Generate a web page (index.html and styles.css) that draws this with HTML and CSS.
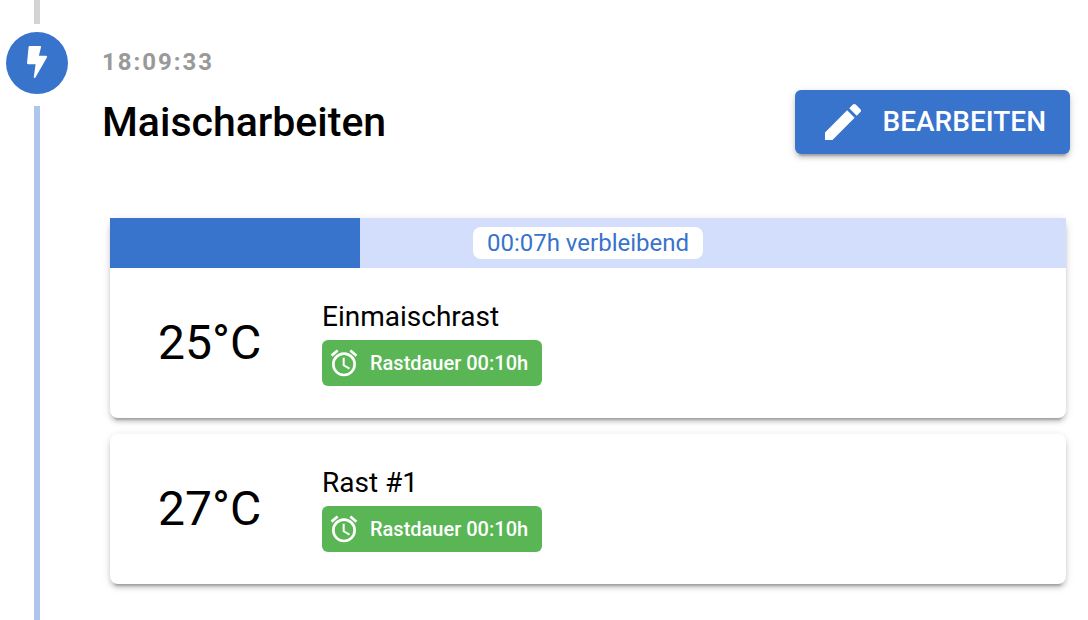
FILE: index.html
```html
<!DOCTYPE html>
<html lang="de">
<head>
<meta charset="utf-8">
<meta name="viewport" content="width=device-width, initial-scale=1">
<title>Maischarbeiten</title>
<link rel="stylesheet" href="styles.css">
</head>
<body>
<svg class="symbols" aria-hidden="true">
  <symbol id="alarm" viewBox="0 0 24 24">
    <path d="M12 20a7 7 0 0 1-7-7 7 7 0 0 1 7-7 7 7 0 0 1 7 7 7 7 0 0 1-7 7m0-16a9 9 0 0 0-9 9 9 9 0 0 0 9 9 9 9 0 0 0 9-9 9 9 0 0 0-9-9m.5 4H11v6l4.750 2.850.75-1.230-4-2.370V8M7.880 3.390 6.600 1.860 2 5.710l1.290 1.530 4.590-3.850M22 5.720l-4.600-3.860-1.290 1.530 4.600 3.860L22 5.720z"/>
  </symbol>
</svg>
<main class="timeline">
  <div class="rail">
    <span class="rail-line rail-line-past"></span>
    <span class="rail-dot">
      <svg class="rail-icon" viewBox="0 0 34 34" aria-hidden="true">
        <path d="M9.800 0H20a1 1 0 0 1 1 1.300L18.900 9.700H26a1.100 1.100 0 0 1 1 1.600L15.600 31.300c-.6 1.100-2 .7-1.800-.6L15.600 18.200H8.200A1.200 1.200 0 0 1 7 16.900L8.600 1.100A1.200 1.200 0 0 1 9.800 0z"/>
      </svg>
    </span>
    <span class="rail-line rail-line-active"></span>
  </div>
  <section class="content">
    <time class="time">18:09:33</time>
    <header class="header">
      <h1 class="title">Maischarbeiten</h1>
      <button class="edit" type="button">
        <svg class="edit-icon" viewBox="0 0 24 24" aria-hidden="true">
          <path d="M20.710 7.040c.39-.39.39-1.040 0-1.410l-2.340-2.340c-.37-.39-1.020-.39-1.410 0l-1.840 1.830 3.750 3.750M3 17.250V21h3.750L17.810 9.930l-3.750-3.750L3 17.250z"/>
        </svg>
        <span>BEARBEITEN</span>
      </button>
    </header>
    <div class="cards">
      <article class="card">
        <div class="progress" role="progressbar" aria-label="Fortschritt" aria-valuenow="26" aria-valuemin="0" aria-valuemax="100">
          <div class="progress-fill" style="width: 26.2%"></div>
          <span class="progress-label">00:07h verbleibend</span>
        </div>
        <div class="card-body">
          <div class="temp">25°C</div>
          <div class="rest">
            <h2 class="rest-name">Einmaischrast</h2>
            <span class="tag"><svg class="tag-icon" aria-hidden="true"><use href="#alarm"/></svg>Rastdauer 00:10h</span>
          </div>
        </div>
      </article>
      <article class="card">
        <div class="card-body">
          <div class="temp">27°C</div>
          <div class="rest">
            <h2 class="rest-name">Rast #1</h2>
            <span class="tag"><svg class="tag-icon" aria-hidden="true"><use href="#alarm"/></svg>Rastdauer 00:10h</span>
          </div>
        </div>
      </article>
    </div>
  </section>
</main>
</body>
</html>
```
FILE: styles.css
```css
* {
  box-sizing: border-box;
}

body {
  margin: 0;
  background: #fff;
  color: #000;
  font-family: Roboto, "Liberation Sans", sans-serif;
}

svg {
  fill: currentColor;
}

.symbols {
  position: absolute;
  width: 0;
  height: 0;
}

.timeline {
  display: grid;
  grid-template-columns: 74px minmax(0, 1fr);
  min-height: 100vh;
}

.rail {
  display: flex;
  flex-direction: column;
  align-items: center;
}

.rail-line {
  width: 6px;
}

.rail-line-past {
  height: 24px;
  background: #d4d4d4;
}

.rail-line-active {
  flex: 1;
  background: #afc6ec;
}

.rail-dot {
  display: flex;
  align-items: center;
  justify-content: center;
  width: 62px;
  height: 62px;
  margin: 8px 0 12px;
  border-radius: 50%;
  background: #3873cc;
  color: #fff;
}

.rail-icon {
  width: 34px;
  height: 34px;
}

.content {
  padding: 48px 18px 36px 28px;
}

.time {
  display: block;
  color: #999;
  font-size: 24px;
  font-weight: 700;
  line-height: 28px;
  letter-spacing: 2px;
}

.header {
  display: flex;
  align-items: center;
  justify-content: space-between;
  margin: 14px 0 64px;
}

.title {
  margin: 0;
  font-size: 41px;
  font-weight: 500;
  line-height: 48px;
}

.edit {
  display: flex;
  align-items: center;
  gap: 16px;
  height: 64px;
  padding: 0 24px;
  border: 0;
  border-radius: 6px;
  background: #3873cc;
  color: #fff;
  font: 500 28px/34px Roboto, "Liberation Sans", sans-serif;
  box-shadow: 0 6px 2px -4px rgba(0, 0, 0, .2), 0 4px 4px rgba(0, 0, 0, .14), 0 2px 10px rgba(0, 0, 0, .12);
}

.edit-icon {
  width: 48px;
  height: 48px;
}

.cards {
  display: grid;
  gap: 16px;
  margin: 0 4px 0 8px;
}

.card {
  border-radius: 8px;
  background: #fff;
  box-shadow: 0 6px 2px -4px rgba(0, 0, 0, .2), 0 4px 4px rgba(0, 0, 0, .14), 0 2px 10px rgba(0, 0, 0, .12);
}

.progress {
  display: grid;
  align-items: center;
  height: 50px;
  background: #d2defc;
}

.progress-fill,
.progress-label {
  grid-area: 1 / 1;
}

.progress-fill {
  height: 100%;
  background: #3873cc;
}

.progress-label {
  justify-self: center;
  padding: 0 14px;
  border-radius: 8px;
  background: #fff;
  color: #3873cc;
  font-size: 24px;
  line-height: 32px;
}

.card-body {
  display: grid;
  grid-template-columns: 164px minmax(0, 1fr);
  align-items: center;
  padding: 32px 48px;
}

.temp {
  font-size: 48px;
  line-height: 56px;
}

.rest {
  display: flex;
  flex-direction: column;
  align-items: flex-start;
  gap: 6px;
}

.rest-name {
  margin: 0;
  font-size: 28px;
  font-weight: 400;
  line-height: 34px;
}

.tag {
  display: flex;
  align-items: center;
  gap: 10px;
  height: 46px;
  padding: 0 14px 0 6px;
  border-radius: 6px;
  background: #5ab655;
  color: #fff;
  font-size: 20px;
  font-weight: 500;
}

.tag-icon {
  width: 32px;
  height: 32px;
}
```
